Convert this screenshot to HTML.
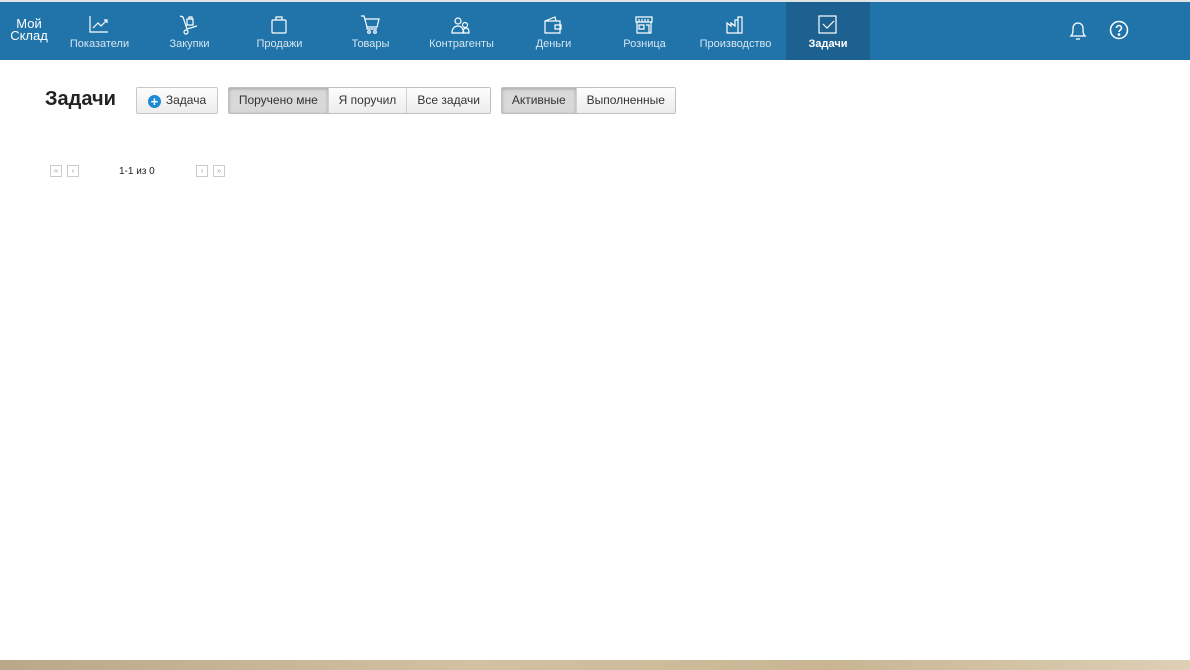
<!DOCTYPE html>
<html><head><meta charset="utf-8"><style>
*{margin:0;padding:0;box-sizing:border-box}
body{width:1190px;height:670px;overflow:hidden;background:#fff;font-family:"Liberation Sans",sans-serif;position:relative}
.top{position:absolute;left:0;top:0;width:1190px;height:2px;background:#dfe3e6}
.nav{position:absolute;left:0;top:2px;width:1190px;height:58px;background:#2074a9}
.logo{position:absolute;left:9px;top:16px;color:#fff;font-size:13px;line-height:12px;text-align:center;width:40px}
.it{position:absolute;top:0;width:91px;height:58px;color:#d6e6f1;font-size:11px;text-align:center}
.it svg{position:absolute;left:35px;top:13px}
.it span{position:absolute;left:0;right:0;top:36px}
.it.act{background:#1c6190;color:#fff;font-weight:bold}
h1{position:absolute;left:45px;top:88px;font-size:20px;font-weight:bold;color:#222}
.btn{position:absolute;top:87px;height:27px;border:1px solid #c8c8c8;border-radius:2px;background:linear-gradient(#fdfdfd,#ececec);font-size:12px;color:#333;line-height:25px;text-align:center}
.grp{position:absolute;top:87px;height:27px;border:1px solid #c0c0c0;border-radius:2px;display:flex;font-size:12px;color:#333;line-height:25px}
.grp div{border-left:1px solid #d0d0d0;background:linear-gradient(#fdfdfd,#ececec);text-align:center}
.grp div:first-child{border-left:none}
.grp .on{background:#d9d9d9;box-shadow:inset 0 1px 3px rgba(0,0,0,.25)}
.pg{position:absolute;top:165px;width:12px;height:12px;border:1px solid #ccc;font-size:8px;color:#aaa;text-align:center;line-height:10px}
.task{position:absolute;left:0;top:660px;width:1190px;height:10px;background:linear-gradient(90deg,#b9a88a,#d2c2a2 40%,#c9b594 70%,#ddd0b5)}
</style></head><body>
<div class="top"></div>
<div class="nav">
<div class="logo">Мой<br>Склад</div>
<div class="it" style="left:54px"><svg width="20" height="18" fill="none" stroke="#fff" stroke-width="1.2"><path d="M1 1v16h18M4 13l5-5 3 3 6-6M15 5h3v3"/></svg><span>Показатели</span></div>
<div class="it" style="left:144px"><svg width="20" height="20" fill="none" stroke="#fff" stroke-width="1.2"><path d="M1 1l3 1 4 12 10-3M8 4h6v6H8zM10 4V2h3v2"/><circle cx="7" cy="17" r="2"/></svg><span>Закупки</span></div>
<div class="it" style="left:234px"><svg width="20" height="20" fill="none" stroke="#fff" stroke-width="1.2"><rect x="3" y="5" width="14" height="13" rx="1"/><path d="M7 5V2h6v3"/></svg><span>Продажи</span></div>
<div class="it" style="left:325px"><svg width="20" height="20" fill="none" stroke="#fff" stroke-width="1.2"><path d="M1 1h3l3 11h10l2-8H5M7 12v2h10"/><circle cx="9" cy="17" r="1.3"/><circle cx="15" cy="17" r="1.3"/></svg><span>Товары</span></div>
<div class="it" style="left:416px"><svg width="20" height="20" fill="none" stroke="#fff" stroke-width="1.2"><circle cx="7" cy="6" r="3"/><circle cx="14" cy="10" r="2.5"/><path d="M1 18c0-5 3-7 6-7s5 2 6 7zM12 18c0-3 1-5 3-5s3 2 3 5z"/></svg><span>Контрагенты</span></div>
<div class="it" style="left:508px"><svg width="20" height="20" fill="none" stroke="#fff" stroke-width="1.2"><path d="M2 6l10-4 1 4M2 6h15v12H2zM12 10h6v4h-6z"/></svg><span>Деньги</span></div>
<div class="it" style="left:599px"><svg width="20" height="20" fill="none" stroke="#fff" stroke-width="1.2"><path d="M2 2h16v5H2zM3 7v11h14V7M5 10h5v4H5zM12 10h3v8M5 4v3M8 4v3M11 4v3M14 4v3"/></svg><span>Розница</span></div>
<div class="it" style="left:690px"><svg width="20" height="20" fill="none" stroke="#fff" stroke-width="1.2"><path d="M2 18V8l4 3V8l4 3V5h3V18zM13 18V2h4v16z"/></svg><span>Производство</span></div>
<div class="it act" style="left:786px;width:84px"><svg width="20" height="20" fill="none" stroke="#fff" stroke-width="1.2" style="left:32px"><rect x="1" y="1" width="17" height="17"/><path d="M5 9l4 4 7-7"/></svg><span>Задачи</span></div>
<svg style="position:absolute;left:1068px;top:18px" width="20" height="22" fill="none" stroke="#fff" stroke-width="1.3"><path d="M3 16c2-2 2-4 2-8a5 5 0 0110 0c0 4 0 6 2 8zM8 19h4"/></svg>
<svg style="position:absolute;left:1109px;top:18px" width="20" height="20" fill="none" stroke="#fff" stroke-width="1.5"><circle cx="10" cy="10" r="8.5"/><path d="M7.5 8a2.5 2.5 0 115 0c0 2-2.5 2-2.5 4"/><circle cx="10" cy="14.5" r=".6" fill="#fff"/></svg>
</div>
<h1>Задачи</h1>
<div class="btn" style="left:136px;width:82px"><span style="display:inline-block;width:13px;height:13px;border-radius:50%;background:#1b8ad3;color:#fff;font-weight:bold;font-size:13px;line-height:13px;vertical-align:-2px;margin-right:5px">+</span>Задача</div>
<div class="grp" style="left:228px;width:263px"><div class="on" style="width:99px">Поручено мне</div><div style="width:79px">Я поручил</div><div style="width:84px">Все задачи</div></div>
<div class="grp" style="left:501px;width:175px"><div class="on" style="width:74px">Активные</div><div style="width:100px">Выполненные</div></div>
<div class="pg" style="left:50px">«</div><div class="pg" style="left:67px">‹</div>
<div style="position:absolute;left:119px;top:166px;font-size:10px;color:#222">1-1 из 0</div>
<div class="pg" style="left:196px">›</div><div class="pg" style="left:213px">»</div>
<div class="task"></div>
</body></html>
